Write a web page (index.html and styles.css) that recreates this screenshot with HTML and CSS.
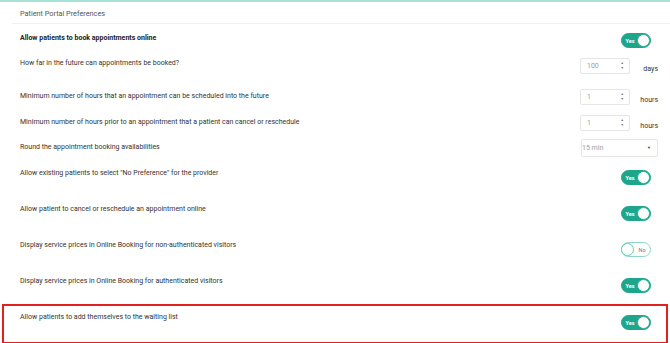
FILE: index.html
```html
<!DOCTYPE html>
<html>
	<head>
		<meta charset="UTF-8">
		<title>Patient Portal Preferences</title>
		<link rel="stylesheet" href="styles.css">
	</head>
	<body>
		<div class="panel">
			<div class="panel-head">Patient Portal Preferences</div>

			<div class="row r1">
				<div class="label strong">Allow patients to book appointments online</div>
				<div class="ctrl"><span class="switch on"><em>Yes</em><i></i></span></div>
			</div>

			<div class="row r2">
				<div class="label">How far in the future can appointments be booked?</div>
				<div class="ctrl">
					<div class="num">100<span class="spin"><b>&#9650;</b><b>&#9660;</b></span></div>
					<span class="unit">days</span>
				</div>
			</div>

			<div class="row r3">
				<div class="label">Minimum number of hours that an appointment can be scheduled into the future</div>
				<div class="ctrl">
					<div class="num">1<span class="spin"><b>&#9650;</b><b>&#9660;</b></span></div>
					<span class="unit">hours</span>
				</div>
			</div>

			<div class="row r4">
				<div class="label">Minimum number of hours prior to an appointment that a patient can cancel or reschedule</div>
				<div class="ctrl">
					<div class="num">1<span class="spin"><b>&#9650;</b><b>&#9660;</b></span></div>
					<span class="unit">hours</span>
				</div>
			</div>

			<div class="row r5">
				<div class="label">Round the appointment booking availabilities</div>
				<div class="ctrl">
					<div class="select">15 min<span class="caret">&#9660;</span></div>
				</div>
			</div>

			<div class="row tall">
				<div class="label">Allow existing patients to select "No Preference" for the provider</div>
				<div class="ctrl"><span class="switch on"><em>Yes</em><i></i></span></div>
			</div>

			<div class="row tall">
				<div class="label">Allow patient to cancel or reschedule an appointment online</div>
				<div class="ctrl"><span class="switch on"><em>Yes</em><i></i></span></div>
			</div>

			<div class="row tall">
				<div class="label">Display service prices in Online Booking for non-authenticated visitors</div>
				<div class="ctrl"><span class="switch off"><i></i><em>No</em></span></div>
			</div>

			<div class="row tall">
				<div class="label">Display service prices in Online Booking for authenticated visitors</div>
				<div class="ctrl"><span class="switch on"><em>Yes</em><i></i></span></div>
			</div>

			<div class="row tall marked">
				<div class="label">Allow patients to add themselves to the waiting list</div>
				<div class="ctrl"><span class="switch on"><em>Yes</em><i></i></span></div>
			</div>
		</div>
	</body>
</html>
```

FILE: styles.css
```css
html, body{
	margin: 0;
	padding: 0;
	background: #fff;
}
body{
	font-family: Roboto, "Liberation Sans", sans-serif;
	font-size: 7px;
	color: #333;
	overflow: hidden;
}
.panel{
	border-top: 2px solid #a6e2d8;
	width: 670px;
}
.panel-head{
	height: 21px;
	line-height: 23px;
	margin-left: 12px;
	padding-left: 8px;
	border-bottom: 1px solid #f1f1f1;
	color: #555;
	font-size: 7.3px;
}
.row{
	display: flex;
	justify-content: space-between;
	align-items: flex-start;
	padding: 0 12px 0 20px;
	box-sizing: border-box;
}
.label{
	line-height: 10px;
	margin-top: 8px;
	white-space: nowrap;
}
.label.strong{
	font-weight: bold;
	color: #222;
}
.ctrl{
	width: 78px;
	display: flex;
	justify-content: flex-end;
	align-items: flex-start;
}
.r1{ height: 26px; }
.r1 .label{ margin-top: 9px; }
.r1 .ctrl{ margin-top: 9px; }
.r2{ height: 33px; }
.r2 .ctrl{ margin-top: 8px; }
.r3{ height: 25px; }
.r3 .ctrl{ margin-top: 6px; }
.r4{ height: 26px; }
.r4 .label{ margin-top: 9px; }
.r4 .ctrl{ margin-top: 7px; }
.r5{ height: 26px; }
.r5 .ctrl{ margin-top: 5px; }
.tall{ height: 36px; }
.tall .label{ margin-top: 8px; }
.tall .ctrl{ margin-top: 10px; }

.switch{
	width: 30px;
	height: 15px;
	box-sizing: border-box;
	border-radius: 8px;
	display: flex;
	align-items: center;
	margin-right: 7px;
	font-size: 5.5px;
}
.switch i{
	width: 13px;
	height: 13px;
	box-sizing: border-box;
	border-radius: 50%;
	background: #fff;
	border: 1px solid #2aae95;
	display: block;
}
.switch em{
	font-style: normal;
	flex: 1;
	text-align: center;
}
.switch.on{
	background: #1ea68c;
	border: 1px solid #1ea68c;
}
.switch.on em{
	color: #fff;
	font-weight: bold;
	padding-left: 1px;
}
.switch.off{
	background: #fff;
	border: 1px solid #8fd5c7;
}
.switch.off i{
	border-color: #6cc8b5;
	margin-left: -1px;
}
.switch.off em{
	color: #777;
}

.num{
	width: 50px;
	height: 16px;
	box-sizing: border-box;
	border: 1px solid #e6e6e6;
	border-radius: 2px;
	line-height: 14px;
	padding-left: 6px;
	color: #a0a0a0;
	position: relative;
}
.spin{
	position: absolute;
	right: 5px;
	top: 2px;
	display: flex;
	flex-direction: column;
	font-size: 3.5px;
	line-height: 5px;
	color: #777;
}
.spin b{
	font-weight: normal;
}
.unit{
	flex: 1;
	text-align: right;
	margin-top: 7px;
	color: #333;
}
.select{
	width: 77px;
	height: 18px;
	box-sizing: border-box;
	border: 1px solid #e6e6e6;
	border-radius: 2px;
	line-height: 16px;
	color: #a0a0a0;
	position: relative;
}
.caret{
	position: absolute;
	right: 6px;
	top: 0;
	font-size: 4px;
	color: #444;
}
.marked{
	margin: 0 2px;
	border: 2px solid #e2211f;
	padding: 0 8px 0 16px;
	height: 40px;
}
.marked .label{
	margin-top: 6px;
}
.marked .ctrl{
	margin-top: 9px;
}
```
